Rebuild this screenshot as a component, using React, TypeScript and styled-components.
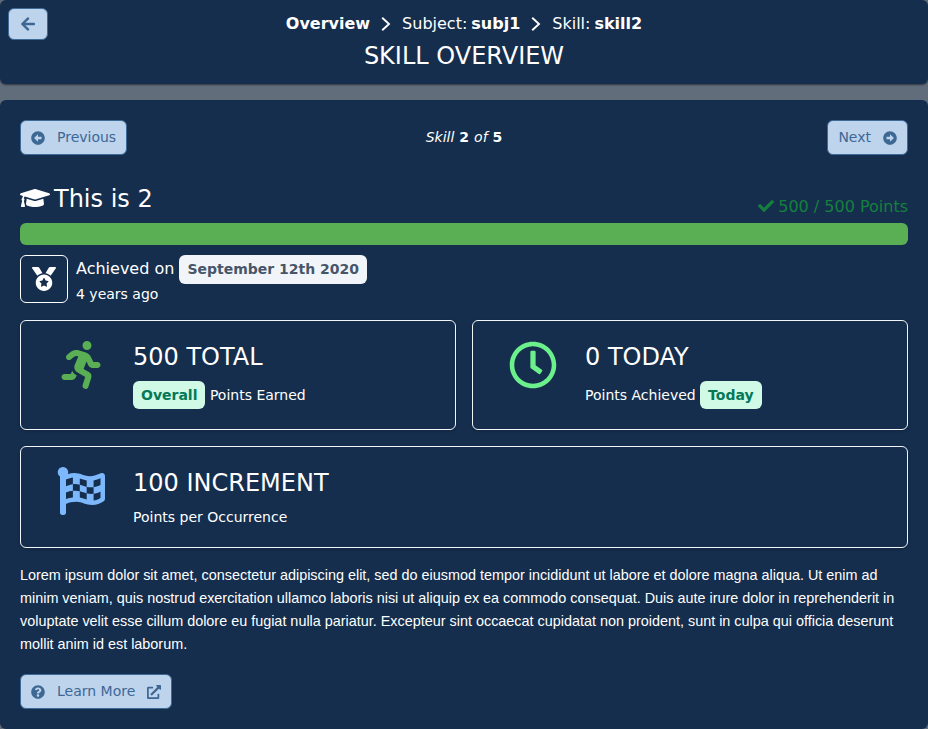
import React from 'react';
import styled, { createGlobalStyle } from 'styled-components';
import {
  FaArrowAltCircleLeft, FaArrowAltCircleRight, FaArrowLeft, FaCheck, FaExternalLinkAlt,
  FaFlagCheckered, FaGraduationCap, FaMedal, FaQuestionCircle, FaRegClock, FaRunning,
} from 'react-icons/fa';

const GlobalStyle = createGlobalStyle`
  * { box-sizing: border-box; }
  body {
    margin: 0;
    background: #626d7c;
    color: #fff;
    font: 16px/24px "DejaVu Sans", sans-serif;
  }
  svg { display: block; flex: none; }
`;

const Page = styled.div`
  display: flex;
  flex-direction: column;
  gap: 16px;
`;

const Header = styled.header`
  display: grid;
  grid-template-columns: 40px 1fr 40px;
  height: 84px;
  padding: 8px;
  border-radius: 6px;
  background: #152e4d;
  box-shadow: 0 1px 2px rgba(0, 0, 0, 0.5);
`;

const Button = styled.button`
  display: inline-flex;
  align-items: center;
  gap: 12px;
  height: 35px;
  padding: 0 10px;
  border: 1px solid #3d6a98;
  border-radius: 6px;
  background: #bed3ec;
  color: #3d6894;
  font: 14px/21px "DejaVu Sans", sans-serif;
`;

const BackButton = styled(Button)`
  width: 40px;
  height: 32px;
  padding: 0;
  justify-content: center;
`;

const Heading = styled.div`
  display: flex;
  flex-direction: column;
  align-items: center;
  padding-top: 4px;
`;

const Breadcrumb = styled.nav`
  display: flex;
  align-items: center;
`;

const Crumb = styled.span`
  display: flex;
  gap: 4px;
`;

const Separator = styled.svg`
  width: 10px;
  height: 14px;
  margin: 0 11px;
`;

const Title = styled.h1`
  margin: 4px 0 0;
  font-size: 24px;
  font-weight: 400;
  line-height: 32px;
`;

const Panel = styled.main`
  display: flex;
  flex-direction: column;
  height: 629px;
  padding: 20px;
  border-radius: 6px;
  background: #152e4d;
`;

const Pager = styled.div`
  display: grid;
  grid-template-columns: 1fr auto 1fr;
  align-items: center;
  height: 35px;

  > :first-child { justify-self: start; }
  > :last-child { justify-self: end; }
`;

const Position = styled.span`
  padding-bottom: 1px;
  font-size: 14px;
  font-style: italic;
  line-height: 21px;
  word-spacing: 0.5px;
  b { font-style: normal; }
`;

const SkillRow = styled.div`
  display: flex;
  align-items: flex-end;
  justify-content: space-between;
  margin-top: 27px;
  height: 36px;
`;

const SkillName = styled.h2`
  display: flex;
  align-items: center;
  gap: 4px;
  height: 36px;
  margin: 0;
  padding-bottom: 2px;
  font-size: 24px;
  font-weight: 400;
  line-height: 33px;

  svg { margin-bottom: 2px; }
`;

const Points = styled.div`
  display: flex;
  align-items: center;
  gap: 4px;
  height: 23px;
  color: #15803d;

  svg { margin-bottom: 1px; }
`;

const Progress = styled.div`
  height: 22px;
  margin-top: 5px;
  border-radius: 6px;
  background: #5aae53;
`;

const Achievement = styled.section`
  display: flex;
  gap: 8px;
  height: 49px;
  margin-top: 10px;
`;

const MedalBox = styled.div`
  display: grid;
  place-items: center;
  width: 48px;
  height: 48px;
  border: 1px solid #fff;
  border-radius: 6px;
`;

const AchievedOn = styled.div`
  display: flex;
  align-items: flex-start;
  gap: 5px;
  height: 29px;
  line-height: 27px;
`;

const Small = styled.div`
  font-size: 14px;
  line-height: 21px;
`;

const Badge = styled.span<{ $green?: boolean }>`
  padding: 0 8px;
  border-radius: 6px;
  background: ${p => (p.$green ? '#d0fae5' : '#f1f5f9')};
  color: ${p => (p.$green ? '#047857' : '#475569')};
  font-size: 14px;
  font-weight: 700;
  line-height: ${p => (p.$green ? 28 : 29)}px;
`;

const Cards = styled.section`
  display: grid;
  grid-template-columns: 1fr 1fr;
  grid-template-rows: 110px 102px;
  gap: 16px;
  margin-top: 16px;
`;

const Card = styled.article<{ $wide?: boolean }>`
  display: flex;
  grid-column: ${p => (p.$wide ? '1 / -1' : 'auto')};
  padding-top: 20px;
  border: 1px solid #f1f5f9;
  border-radius: 6px;
  box-shadow: 0 1px 3px rgba(0, 0, 0, 0.2);
`;

const CardIcon = styled.div<{ $color: string }>`
  display: flex;
  justify-content: center;
  width: 80px;
  margin-left: 20px;
  margin-right: 12px;
  color: ${p => p.$color};
`;

const CardTitle = styled.div`
  height: 32px;
  font-size: 24px;
  line-height: 33px;
`;

const CardNote = styled.div<{ $tall?: boolean }>`
  display: flex;
  align-items: center;
  gap: 4.4px;
  height: ${p => (p.$tall ? 28 : 20)}px;
  margin-top: 8px;
  font-size: 14px;
`;

const Description = styled.p`
  margin: 16px 0 18px;
  font: 14.4px/23px "Liberation Sans", sans-serif;
`;

const LearnMore = styled(Button)`
  align-self: flex-start;
`;

const Chevron = () => (
  <Separator viewBox="0 0 10 14" fill="none" stroke="currentColor" strokeWidth="1.9">
    <path d="M1.2.8 8 7l-6.800 6.200" />
  </Separator>
);

export default function App() {
  return (
    <Page>
      <GlobalStyle />
      <Header>
        <BackButton aria-label="Back"><FaArrowLeft size={16} /></BackButton>
        <Heading>
          <Breadcrumb>
            <b>Overview</b><Chevron />
            <Crumb><span>Subject:</span><b>subj1</b></Crumb><Chevron />
            <Crumb><span>Skill:</span><b>skill2</b></Crumb>
          </Breadcrumb>
          <Title>SKILL OVERVIEW</Title>
        </Heading>
      </Header>
      <Panel>
        <Pager>
          <Button><FaArrowAltCircleLeft size={14} />Previous</Button>
          <Position>Skill <b>2</b> of <b>5</b></Position>
          <Button>Next<FaArrowAltCircleRight size={14} /></Button>
        </Pager>
        <SkillRow>
          <SkillName><FaGraduationCap size={30} />This is 2</SkillName>
          <Points><FaCheck size={16} />500 / 500 Points</Points>
        </SkillRow>
        <Progress />
        <Achievement>
          <MedalBox><FaMedal size={24} /></MedalBox>
          <div>
            <AchievedOn>Achieved on <Badge>September 12th 2020</Badge></AchievedOn>
            <Small>4 years ago</Small>
          </div>
        </Achievement>
        <Cards>
          <Card>
            <CardIcon $color="#5aae53"><FaRunning size={48} /></CardIcon>
            <div>
              <CardTitle>500 TOTAL</CardTitle>
              <CardNote $tall><Badge $green>Overall</Badge>Points Earned</CardNote>
            </div>
          </Card>
          <Card>
            <CardIcon $color="#6bf08b"><FaRegClock size={48} /></CardIcon>
            <div>
              <CardTitle>0 TODAY</CardTitle>
              <CardNote $tall>Points Achieved<Badge $green>Today</Badge></CardNote>
            </div>
          </Card>
          <Card $wide>
            <CardIcon $color="#7cb8fb"><FaFlagCheckered size={48} /></CardIcon>
            <div>
              <CardTitle>100 INCREMENT</CardTitle>
              <CardNote>Points per Occurrence</CardNote>
            </div>
          </Card>
        </Cards>
        <Description>
          Lorem ipsum dolor sit amet, consectetur adipiscing elit, sed do eiusmod tempor incididunt ut labore et dolore magna aliqua. Ut enim ad minim veniam, quis nostrud exercitation ullamco laboris nisi ut aliquip ex ea commodo consequat. Duis aute irure dolor in reprehenderit in voluptate velit esse cillum dolore eu fugiat nulla pariatur. Excepteur sint occaecat cupidatat non proident, sunt in culpa qui officia deserunt mollit anim id est laborum.
        </Description>
        <LearnMore><FaQuestionCircle size={14} />Learn More<FaExternalLinkAlt size={14} /></LearnMore>
      </Panel>
    </Page>
  );
}
